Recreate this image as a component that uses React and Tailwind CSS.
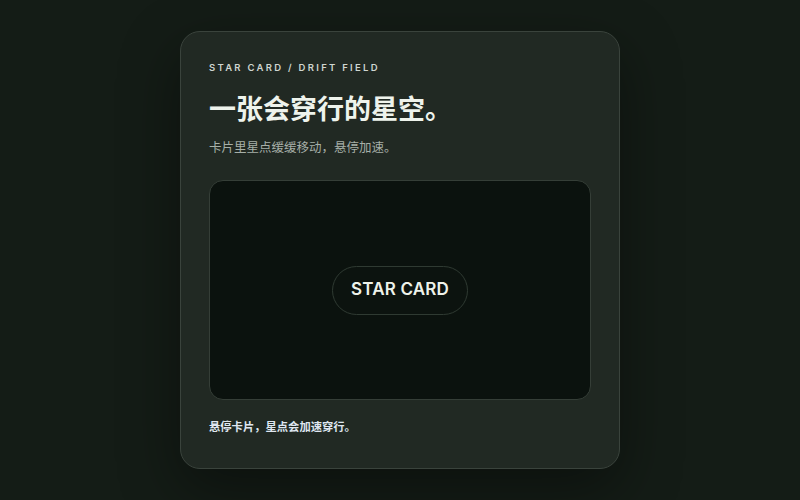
import React from 'react';

const font = { fontFamily: 'Inter, "Noto Sans CJK SC", sans-serif' };

export default function App() {
  return (
    <div className="w-full h-[500px] bg-[#141c16] flex justify-center items-start pt-[31px]" style={font}>
      {/* Card */}
      <div className="w-[440px] h-[438px] rounded-[20px] bg-[#212923] border border-[#3a433c] shadow-[0_20px_60px_rgba(0,0,0,0.4)] px-[28px] pt-[29px] flex flex-col">
        <div className="text-[9.5px] leading-[14px] font-semibold tracking-[0.24em] text-[#cfd6d1]">
          STAR CARD / DRIFT FIELD
        </div>
        <h1 className="mt-[17px] text-[27px] leading-[36px] font-bold text-[#eef3ec]">
          一张会穿行的星空。
        </h1>
        <p className="mt-[10px] text-[12.5px] leading-[20px] text-[#a6afa8]">
          卡片里星点缓缓移动，悬停加速。
        </p>

        {/* Star field */}
        <div className="mt-[22px] h-[220px] rounded-[14px] bg-[#0b120e] border border-[#353e37] flex items-center justify-center">
          <div className="h-[49px] px-[18px] rounded-full border border-[#2f3a32] bg-[#0c130f] flex items-center text-[17px] font-semibold tracking-[0.01em] text-[#eef2ea]">
            STAR CARD
          </div>
        </div>

        <p className="mt-[19px] text-[11.3px] leading-[16px] font-bold text-[#dfe6f0]">
          悬停卡片，星点会加速穿行。
        </p>
      </div>
    </div>
  );
}
